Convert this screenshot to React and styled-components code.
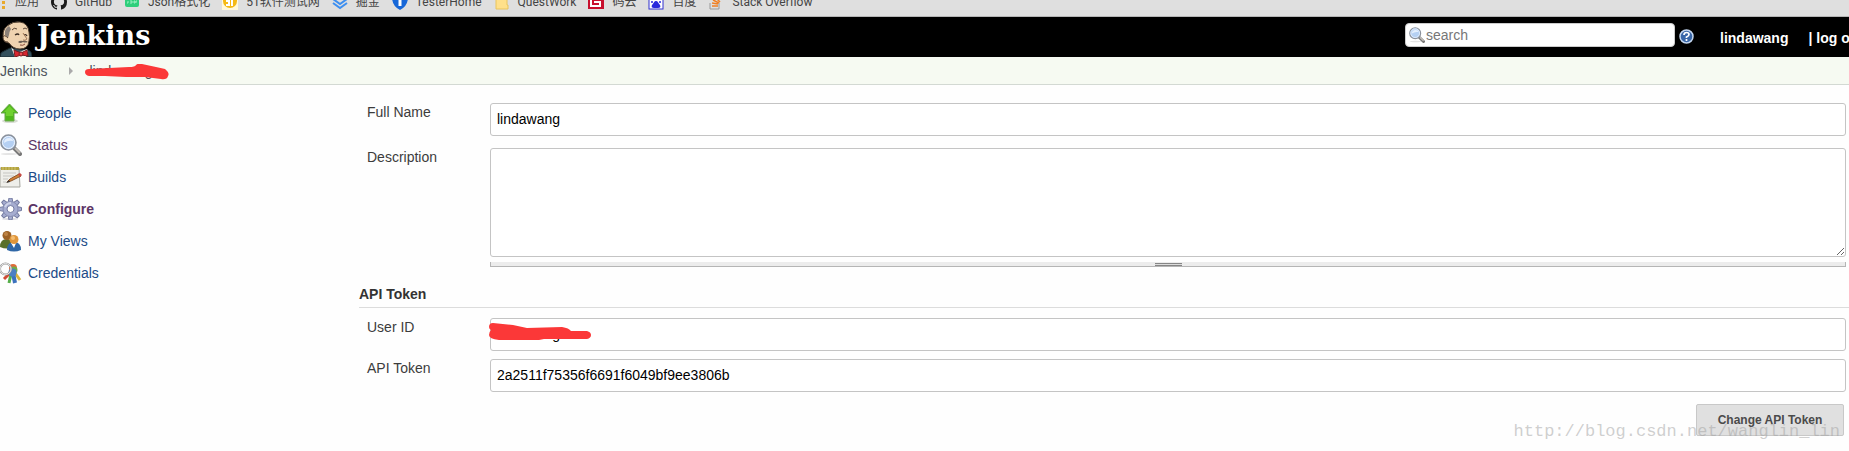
import React from 'react';
import styled, { createGlobalStyle } from 'styled-components';

const Global = createGlobalStyle`
  * { box-sizing: border-box; }
  body {
    margin: 0;
    background: #fefefe;
    color: #3c3c3c;
    font: 14px/18px "Liberation Sans", Arial, sans-serif;
    overflow-x: hidden;
  }
  svg { display: block; flex: none; }
`;

const Page = styled.div`
  position: relative;
  overflow: hidden;
  padding-bottom: 15px;
`;

/* Browser bookmarks strip */
const Bookmarks = styled.nav`
  display: flex;
  align-items: flex-end;
  height: 17px;
  padding-bottom: 6px;
  overflow: hidden;
  background: #dfdfdf;
  border-bottom: 1px solid #b4b4b4;
`;
const Bookmark = styled.a`
  display: flex;
  align-items: center;
  gap: 8px;
  height: 16px;
  margin-right: 12px;
  color: #444;
  font: 12px/16px Roboto, "Noto Sans CJK SC", sans-serif;
  text-decoration: none;
  white-space: nowrap;
`;

/* Header */
const Header = styled.header`
  display: flex;
  height: 40px;
  background: #000;
`;
const Brand = styled.a`
  display: flex;
  align-items: flex-end;
  gap: 5px;
  margin-right: auto;
  color: #fff;
  text-decoration: none;
`;
const Wordmark = styled.span`
  font: bold 27px/38px "DejaVu Serif", Georgia, serif;
  align-self: flex-start;
`;
const SearchBox = styled.label`
  display: flex;
  align-items: center;
  gap: 1px;
  width: 270px;
  height: 24px;
  margin: 6px 4px 0 0;
  padding: 0 3px;
  background: #fff;
  border: 1px solid #ccc;
  border-radius: 4px;
`;
const SearchInput = styled.input`
  flex: 1;
  min-width: 0;
  padding: 0;
  border: 0;
  outline: 0;
  background: none;
  font: inherit;
  &::placeholder { color: #777; opacity: 1; }
`;
const Help = styled.a`
  margin-top: 12px;
`;
const Login = styled.div`
  display: flex;
  gap: 20px;
  width: 129px;
  margin-left: 26px;
  padding-top: 12px;
  overflow: hidden;
  color: #fff;
  font-weight: bold;
  white-space: nowrap;
  a { color: inherit; text-decoration: none; }
`;

/* Breadcrumbs */
const Breadcrumbs = styled.nav`
  display: flex;
  align-items: center;
  height: 28px;
  background: #f6faf2;
  border-bottom: 1px solid #d3d9d3;
  a { color: #4d545d; text-decoration: none; }
`;
const Separator = styled.svg`
  margin: 0 15px 0 22px;
`;
const Redacted = styled.span`
  position: relative;
  display: block;
`;
const Scribble = styled.svg`
  position: absolute;
  left: ${(p) => p.$left}px;
  top: ${(p) => p.$top}px;
  pointer-events: none;
`;

/* Body */
const Body = styled.div`
  display: flex;
`;
const Side = styled.nav`
  flex: none;
  width: 359px;
  padding-top: 12px;
`;
const Task = styled.a`
  display: flex;
  align-items: center;
  gap: 6px;
  width: max-content;
  height: 32px;
  color: ${(p) => (p.$visited ? '#5c3566' : '#204a87')};
  font-weight: ${(p) => (p.$current ? 'bold' : 'normal')};
  text-decoration: none;
`;
const Form = styled.form`
  flex: 1;
  min-width: 0;
  padding-top: 18px;
`;
const Row = styled.div`
  display: grid;
  grid-template-columns: 123px 1fr;
  align-items: start;
  margin-bottom: ${(p) => p.$gap || 0}px;
  padding: 0 3px 0 8px;
`;
const Field = styled.div`
  position: relative;
  display: flex;
  flex-direction: column;
`;
const TextInput = styled.input`
  width: 100%;
  height: 33px;
  padding: 0 6px 2px;
  border: 1px solid #c4c4c4;
  border-radius: 3px;
  background: #fff;
  color: #000;
  font: inherit;
`;
const TextArea = styled.textarea`
  width: 100%;
  height: 109px;
  padding: 6px;
  border: 1px solid #c4c4c4;
  border-radius: 3px;
  background: #fff;
  font: inherit;
`;
const Handle = styled.div`
  display: flex;
  justify-content: center;
  align-items: flex-start;
  height: 5px;
  margin-top: 5px;
  padding-top: 1px;
  background: #ececec;
  border: solid #b5b5b5;
  border-width: 0 1px 1px;
`;
const Grip = styled.span`
  width: 27px;
  height: 3px;
  border: solid #858585;
  border-width: 1px 0;
  background: #dcdcdc;
`;
const SectionTitle = styled.h2`
  margin: 17px 0 10px;
  padding-bottom: 3px;
  border-bottom: 1px solid #dcdcdc;
  color: #333;
  font-size: 14px;
  line-height: 20px;
`;
const Actions = styled.div`
  display: flex;
  justify-content: flex-end;
  padding-right: 5px;
`;
const Button = styled.button`
  width: 148px;
  height: 32px;
  padding: 0;
  border: 1px solid #c8c8c8;
  border-radius: 2px;
  background: #e0e0e0;
  color: #4b4b4b;
  font: bold 12px/18px "Liberation Sans", Arial, sans-serif;
`;
const Watermark = styled.div`
  position: absolute;
  right: 9px;
  bottom: 9px;
  color: rgba(160, 160, 160, 0.5);
  font: 17px/20px "Liberation Mono", monospace;
  pointer-events: none;
`;

const Svg = ({ w = 16, h = w, children }) => (
  <svg width={w} height={h} viewBox={`0 0 ${w} ${h}`} fill="none" aria-hidden="true">
    {children}
  </svg>
);

const bookmarks = [
  {
    text: 'GitHub',
    icon: (
      <Svg>
        <path fill="#1b1b1b" d="M8 0C3.58 0 0 3.58 0 8c0 3.54 2.29 6.53 5.47 7.59.4.07.55-.17.55-.38 0-.19-.01-.82-.01-1.49-2.01.37-2.53-.49-2.69-.94-.09-.23-.48-.94-.82-1.13-.28-.15-.68-.52-.01-.53.63-.01 1.08.58 1.23.82.72 1.21 1.87.87 2.33.66.07-.52.28-.87.51-1.07-1.78-.2-3.64-.89-3.64-3.95 0-.87.31-1.59.82-2.15-.08-.2-.36-1.02.08-2.12 0 0 .67-.21 2.2.82a7.4 7.4 0 0 1 4 0c1.53-1.04 2.2-.82 2.2-.82.44 1.1.16 1.92.08 2.12.51.56.82 1.27.82 2.15 0 3.07-1.87 3.75-3.65 3.95.29.25.54.73.54 1.48 0 1.07-.01 1.93-.01 2.2 0 .21.15.46.55.38A8 8 0 0 0 16 8c0-4.42-3.58-8-8-8z" />
      </Svg>
    ),
  },
  {
    text: 'Json格式化',
    icon: (
      <Svg>
        <rect x="1" y="0" width="14" height="13" rx="2" fill="#2fcf7c" />
        <path d="M4 7v2H3m3 0h2V7H6m4 0h1v2h-1zm2 2V7h1" stroke="#9bf0c2" />
      </Svg>
    ),
  },
  {
    text: '51软件测试网',
    icon: (
      <Svg>
        <rect width="16" height="16" fill="#fff8dc" />
        <circle cx="8" cy="7" r="7" fill="#f5b915" />
        <path d="M4 11h3V7H4m6 5V3" stroke="#fff" strokeWidth="2" />
      </Svg>
    ),
  },
  {
    text: '掘金',
    icon: (
      <Svg>
        <path d="M1 5l7 5 7-5M1 9l7 5 7-5" stroke="#3d8ff0" strokeWidth="2" />
      </Svg>
    ),
  },
  {
    text: 'TesterHome',
    icon: (
      <Svg>
        <path d="M0 3Q5 3 8 0q3 3 8 3 0 9-8 13Q0 12 0 3z" fill="#1767d8" />
        <path d="M8 3v9" stroke="#fff" strokeWidth="3" />
      </Svg>
    ),
  },
  {
    text: 'QuestWork',
    icon: (
      <Svg>
        <path d="M2 1h11v10h1v4H2z" fill="#ffe08a" stroke="#e9c45c" />
      </Svg>
    ),
  },
  {
    text: '码云',
    icon: (
      <Svg>
        <rect width="16" height="15" fill="#c8102e" />
        <path d="M13 3H3v9h9V8H6" stroke="#fff" strokeWidth="2" />
      </Svg>
    ),
  },
  {
    text: '百度',
    icon: (
      <Svg>
        <rect x="1" y="1" width="14" height="14" fill="#fff" stroke="#3232d0" />
        <path d="M8 7c2 0 2 2 4 4 1 2 0 3-2 3H6c-2 0-3-1-2-3 2-2 2-4 4-4z" fill="#2929dc" />
        <circle cx="4" cy="8" r="1" fill="#2929dc" />
        <circle cx="12" cy="8" r="1" fill="#2929dc" />
      </Svg>
    ),
  },
  {
    text: 'Stack Overflow',
    icon: (
      <Svg>
        <path d="M2 9v6h9V9" stroke="#999" />
        <path d="M4 12h6M4 9l6 1M5 6l6 3M7 3l5 5" stroke="#f08024" strokeWidth="1.5" />
      </Svg>
    ),
  },
];

const Butler = () => (
  <Svg w={32} h={36}>
    <path d="M0 36q0-5 4-6l6-3 18 2q4 1 4 7z" fill="#33505c" stroke="#16262d" />
    <path d="M11 26l6 6 10-4 1 3-2 5H15z" fill="#f3f3ec" />
    <path d="M4 19Q1 10 7 5q6-5 13-4 8 1 9 10 1 5 0 9-1 8-9 8-7 0-11-6-4 0-5-3z" fill="#efd3b0" stroke="#4a3a2c" />
    <path d="M5 14Q4 8 9 5l2 3q-2 3-2 6l-1 3z" fill="#8b8179" />
    <path d="M8 17q-4-4-5-1 0 5 5 5" fill="#efd3b0" stroke="#5b4636" />
    <path d="M12 9q2-3 5-1m6 0q2-2 4 0" stroke="#5b4636" />
    <path d="M15 14q3-2 4 0m5 0q2-1 3 1" stroke="#3a2c22" strokeWidth="1.3" />
    <path d="M23 12l4 6q-2 2-4 1" stroke="#a27857" />
    <path d="M18 21q2-2 5-1 3-1 5 1-3 1-5 0-3 2-5 0z" fill="#695d53" />
    <path d="M20 24q3 1 5-1" stroke="#8a4c3c" />
    <path d="M14 29l7 3 6-3 1 6-7-1-6 2z" fill="#d9262e" stroke="#791b20" />
    <circle cx="21" cy="33" r="2" fill="#f04a50" stroke="#791b20" />
  </Svg>
);

const Lens = ({ size }) => (
  <svg width={size} height={size} viewBox="0 0 22 22" fill="none" aria-hidden="true">
    <ellipse cx="9" cy="20" rx="8" ry="1" fill="#e4e4e4" />
    <path d="M14 14l6 6" stroke="#777" strokeWidth="4" strokeLinecap="round" />
    <path d="M15 14l5 5" stroke="#c3beb8" strokeWidth="2" />
    <circle cx="8.5" cy="8.5" r="7.5" fill="#b5d0f3" stroke="#8b919b" strokeWidth="1.6" />
    <circle cx="8.5" cy="8.5" r="6" stroke="#eef5ff" />
    <path d="M4 9q0-5 5-5 4 0 4 3-5-1-9 2z" fill="#e4effd" />
  </svg>
);

const tasks = [
  {
    text: 'People',
    icon: (
      <Svg w={22}>
        <ellipse cx="10" cy="19" rx="8" ry="2" fill="#d8dcd4" />
        <path d="M9.500 2L18 11h-4v8H5v-8H1z" fill="#4fb81a" stroke="#6aa74a" />
        <path d="M9.500 4L15 10h-2v4H6v-4H4z" fill="#6fd02f" />
      </Svg>
    ),
  },
  { text: 'Status', visited: true, icon: <Lens size={22} /> },
  {
    text: 'Builds',
    icon: (
      <Svg w={22}>
        <path d="M0 2h19l1 19H0z" fill="#eeeeea" stroke="#a5a59e" />
        <path d="M1 1h18v3H1z" fill="#b3a33e" />
        <path d="M3 1v3m3-3v3m3-3v3m3-3v3m3-3v3" stroke="#cfc273" />
        <path d="M3 7h13M3 10h11M3 13h5M3 16h3" stroke="#c5c5c2" />
        <path d="M7 16l3-3 9-5 2 2-10 5z" fill="#d38134" stroke="#8b552c" />
        <path d="M18 8l2-1 2 2-2 2z" fill="#c64a45" />
        <path d="M6 17l3-3 1 2z" fill="#333" />
      </Svg>
    ),
  },
  {
    text: 'Configure',
    visited: true,
    current: true,
    icon: (
      <Svg w={22}>
        <ellipse cx="10" cy="21" rx="8" ry="1" fill="#dddde4" />
        <g fill="#a6add0" stroke="#737a9f">
          {[0, 45, 90, 135, 180, 225, 270, 315].map((a) => (
            <path key={a} d="M8 5l1-5h3l1 5z" transform={`rotate(${a} 10.500 11)`} />
          ))}
        </g>
        <circle cx="10.500" cy="11" r="7.500" fill="#a6add0" stroke="#868db3" />
        <path d="M5 9q2-4 6-4" stroke="#cdd2e8" strokeWidth="2" />
        <circle cx="10.500" cy="11" r="3.500" fill="#fff" stroke="#747ba2" />
      </Svg>
    ),
  },
  {
    text: 'My Views',
    icon: (
      <Svg w={22}>
        <path d="M0 17q0-8 7-8t7 8q-7 3-14 0z" fill="#58702b" />
        <circle cx="7" cy="5.500" r="4.500" fill="#9b6126" />
        <circle cx="6" cy="4" r="2" fill="#bd8346" />
        <path d="M7 20q0-8 7-8t7 8q-7 3-14 0z" fill="#2f67a6" />
        <path d="M11 13l3 5 2-5z" fill="#fff" />
        <circle cx="14" cy="9.500" r="4.500" fill="#df963b" />
        <circle cx="13" cy="8" r="2" fill="#f5bd71" />
      </Svg>
    ),
  },
  {
    text: 'Credentials',
    icon: (
      <Svg w={22}>
        <path d="M10 11l-6 6" stroke="#d14b36" strokeWidth="3" />
        <path d="M15 11l5 7" stroke="#dbb33c" strokeWidth="3" />
        <path d="M11 12l-2 9" stroke="#55ae49" strokeWidth="3" />
        <path d="M13 11l2 10" stroke="#3c72bd" strokeWidth="4" />
        <circle cx="13" cy="6" r="4" fill="#df6b39" />
        <circle cx="14" cy="8" r="3.500" fill="#6cae4b" />
        <circle cx="12.500" cy="10.500" r="4" fill="#4c7fc3" />
        <circle cx="5.500" cy="7" r="5.500" stroke="#9a9a9a" strokeWidth="2" />
        <circle cx="5.500" cy="7" r="5.500" stroke="#e6e6e6" />
      </Svg>
    ),
  },
];

const stop = (e) => e.preventDefault();

export default function App() {
  return (
    <>
      <Global />
      <Page>
        <Bookmarks aria-label="Bookmarks">
          <Bookmark href="#apps">
            <Svg w={7} h={16}>
              <path d="M2 2h3v3H2zM2 7h3v3H2zM2 12h3v3H2z" fill="#e8a92c" />
            </Svg>
            应用
          </Bookmark>
          {bookmarks.map((b) => (
            <Bookmark key={b.text} href="#bookmark">
              {b.icon}
              {b.text}
            </Bookmark>
          ))}
        </Bookmarks>

        <Header>
          <Brand href="#home">
            <Butler />
            <Wordmark>Jenkins</Wordmark>
          </Brand>
          <SearchBox>
            <Lens size={16} />
            <SearchInput placeholder="search" aria-label="search" />
          </SearchBox>
          <Help href="#help" aria-label="Help">
            <Svg w={15}>
              <circle cx="7.500" cy="7.500" r="6.500" fill="#3866a8" stroke="#c3d6ef" strokeWidth="1.500" />
              <path d="M5 6q0-2.500 2.500-2.500T10 5.500Q10 7 7.500 8v1m0 1v2" stroke="#fff" strokeWidth="1.700" />
            </Svg>
          </Help>
          <Login>
            <a href="#user">lindawang</a>
            <span>
              | <a href="#logout">log out</a>
            </span>
          </Login>
        </Header>

        <Breadcrumbs aria-label="Breadcrumbs">
          <a href="#home">Jenkins</a>
          <Separator width="5" height="8" viewBox="0 0 5 8" aria-hidden="true">
            <path d="M0 0l4 4-4 4z" fill="#aaa" />
          </Separator>
          <Redacted>
            <a href="#user">lindawang</a>
            <Scribble $left={-4} $top={2} width="86" height="16" viewBox="0 0 86 16" aria-hidden="true">
              <path d="M4 5L44 3Q50 3 51 1q2-2 6-1l14 3 9 2q5 4 3 7-1 4-7 3L60 13H41L20 12H4Q0 11 0 8q0-3 4-3z" fill="#fb3838" />
            </Scribble>
          </Redacted>
        </Breadcrumbs>

        <Body>
          <Side aria-label="Tasks">
            {tasks.map((t) => (
              <Task key={t.text} href="#task" $visited={t.visited} $current={t.current}>
                {t.icon}
                {t.text}
              </Task>
            ))}
          </Side>
          <Form onSubmit={stop}>
            <Row $gap={12}>
              <label htmlFor="fullName">Full Name</label>
              <TextInput id="fullName" defaultValue="lindawang" />
            </Row>
            <Row>
              <label htmlFor="description">Description</label>
              <Field>
                <TextArea id="description" />
                <Handle>
                  <Grip />
                </Handle>
              </Field>
            </Row>
            <SectionTitle>API Token</SectionTitle>
            <Row $gap={8}>
              <label htmlFor="userId">User ID</label>
              <Field>
                <TextInput id="userId" defaultValue="lindawang" readOnly />
                <Scribble $left={-1} $top={5} width="103" height="17" viewBox="0 0 103 17" aria-hidden="true">
                  <path d="M4 0l20 2 14 3 35-1q7 1 9 4h16q4 1 4 4t-4 4H55l-5 1H10Q0 16 0 12q0-3 2-5-2-1-2-3 0-4 4-4z" fill="#fb3838" />
                </Scribble>
              </Field>
            </Row>
            <Row $gap={12}>
              <label htmlFor="apiToken">API Token</label>
              <TextInput id="apiToken" defaultValue="2a2511f75356f6691f6049bf9ee3806b" readOnly />
            </Row>
            <Actions>
              <Button type="button">Change API Token</Button>
            </Actions>
          </Form>
        </Body>
        <Watermark>http://blog.csdn.net/wanglin_lin</Watermark>
      </Page>
    </>
  );
}
